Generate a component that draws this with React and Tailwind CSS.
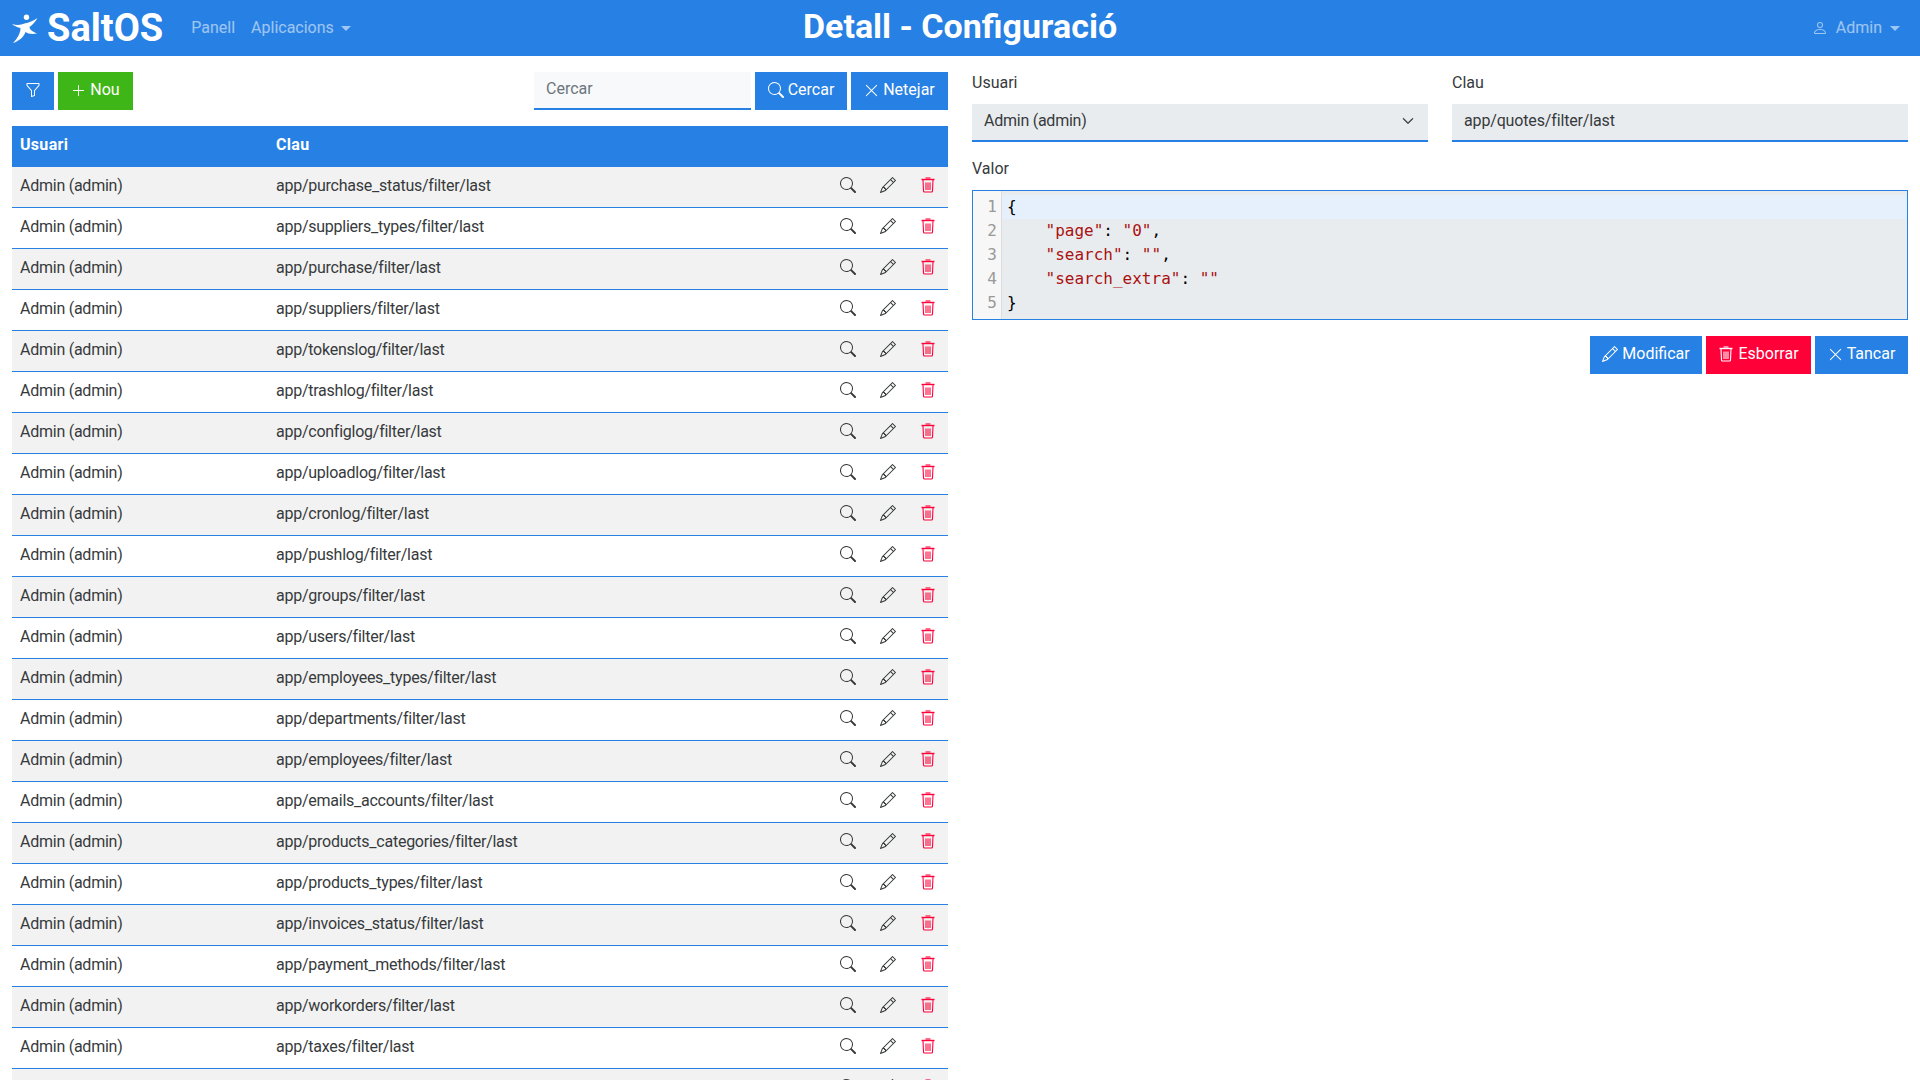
import React from "react";
import { BsFunnel, BsPlusLg, BsSearch, BsXLg, BsPencil, BsPerson, BsChevronDown } from "react-icons/bs";

const ROWS = [
  "app/purchase_status/filter/last",
  "app/suppliers_types/filter/last",
  "app/purchase/filter/last",
  "app/suppliers/filter/last",
  "app/tokenslog/filter/last",
  "app/trashlog/filter/last",
  "app/configlog/filter/last",
  "app/uploadlog/filter/last",
  "app/cronlog/filter/last",
  "app/pushlog/filter/last",
  "app/groups/filter/last",
  "app/users/filter/last",
  "app/employees_types/filter/last",
  "app/departments/filter/last",
  "app/employees/filter/last",
  "app/emails_accounts/filter/last",
  "app/products_categories/filter/last",
  "app/products_types/filter/last",
  "app/invoices_status/filter/last",
  "app/payment_methods/filter/last",
  "app/workorders/filter/last",
  "app/taxes/filter/last",
  "",
];

function Logo() {
  return (
    <svg width="26" height="30" viewBox="0 0 26 30" fill="white" className="mt-[2px]">
      <circle cx="14.5" cy="3.2" r="2.7" />
      <path d="M0 10 C5 11.5 9 11 12.5 9.5 C17 8.5 21 7 25.5 4 C23 8.5 20 11 17.5 13 C17.5 15.5 20.5 17.5 25 19.5 C20.5 20.5 16 20 13.5 18 C12 22.5 7.5 27 1 29 C5.5 24.5 8.5 19 8.5 14 C5.5 13.5 2.5 12 0 10 Z" />
    </svg>
  );
}

// bi-trash3 as the icon font hints it: narrower and crisper than the svg
function TrashIcon() {
  return (
    <svg width="16" height="16" viewBox="0 0 16 16" fill="none" stroke="currentColor" strokeWidth="1.1">
      <path d="M5.5 1h5" />
      <path d="M1.5 2.5h13" strokeWidth="1.4" />
      <path d="M3 3l.5 11a1 1 0 0 0 1 1h7a1 1 0 0 0 1-1L13 3" />
      <path d="M6 5.5v7.5M8 5.5v7.5M10 5.5v7.5" />
    </svg>
  );
}

function Button({ color = "bg-[#2780e3]", className = "", children }) {
  return (
    <button type="button" className={`${color} ${className} flex h-[38px] items-center justify-center gap-1 pb-[2px] text-white`}>
      {children}
    </button>
  );
}

function Label({ children }) {
  return <label className="mb-2 block h-6 leading-[22px] text-[#373a3c]">{children}</label>;
}

function Navbar() {
  return (
    <nav className="relative flex h-14 shrink-0 items-center bg-[#2780e3] pl-3 pr-5">
      <Logo />
      <span className="ml-[9px] text-[38px] font-bold leading-none text-white">SaltOS</span>
      <a className="ml-[28px] text-white/55">Panell</a>
      <a className="ml-4 flex items-center text-white/55">
        Aplicacions
        <span className="ml-[7px] border-x-[5px] border-t-[5px] border-x-transparent border-t-white/55" />
      </a>
      <h1 className="absolute inset-x-0 pb-[4px] text-center text-[34px] font-bold text-white">Detall - Configuració</h1>
      <a className="ml-auto flex items-center text-white/55">
        <BsPerson size={16} className="mr-2" />
        Admin
        <span className="ml-2 border-x-[5px] border-t-[5px] border-x-transparent border-t-white/55" />
      </a>
    </nav>
  );
}

function ListPanel() {
  return (
    <section className="w-[936px] shrink-0">
      <div className="flex gap-1">
        <Button className="w-[42px]"><BsFunnel size={16} /></Button>
        <Button color="bg-[#3fb618]" className="w-[75px]"><BsPlusLg size={15} />Nou</Button>
        <div className="ml-auto h-[38px] w-[217px] border-b-2 border-[#2780e3] bg-[#f8f9fa] px-3 leading-[34px] text-[#6c757d]">Cercar</div>
        <Button className="w-[92px]"><BsSearch size={16} />Cercar</Button>
        <Button className="w-[97px]"><BsXLg size={15} />Netejar</Button>
      </div>
      <table className="mt-4 w-full border-separate border-spacing-0 text-[#373a3c]">
        <thead>
          <tr className="bg-[#2780e3] text-left text-white">
            <th className="h-[41px] w-[256px] px-2 pb-[3px] font-bold tracking-[0.3px]">Usuari</th>
            <th className="h-[41px] px-2 pb-[3px] font-bold tracking-[0.3px]">Clau</th>
            <th className="h-[41px] w-[120px]" />
          </tr>
        </thead>
        <tbody>
          {ROWS.map((key, index) => (
            <tr key={key} className={index % 2 === 0 ? "bg-[#f2f2f2]" : "bg-white"}>
              <td className="h-[41px] border-b border-[#2780e3] px-2 pb-[3px] tracking-[-0.25px]">{key && "Admin (admin)"}</td>
              <td className="h-[41px] border-b border-[#2780e3] px-2 pb-[3px] tracking-[-0.25px]">{key}</td>
              <td className="h-[41px] border-b border-[#2780e3] pb-[5px]">
                <div className="flex items-center pl-[5px]">
                  <span className="flex w-10 justify-center"><BsSearch size={16} /></span>
                  <span className="flex w-10 justify-center"><BsPencil size={16} /></span>
                  <span className="flex w-10 justify-center text-[#ff0039]"><TrashIcon /></span>
                </div>
              </td>
            </tr>
          ))}
        </tbody>
      </table>
    </section>
  );
}

function Editor() {
  const str = "text-[#aa1111]";
  return (
    <div className="flex h-[130px] overflow-hidden border border-[#2780e3] bg-[#e9ecef] font-['DejaVu_Sans_Mono',monospace] text-[16px] leading-6 text-black">
      <div className="w-[29px] shrink-0 border-r border-[#ddd] bg-[#f7f7f7] pr-1 pt-1 text-right text-[#999]">
        {[1, 2, 3, 4, 5].map((line) => <div key={line}>{line}</div>)}
      </div>
      <pre className="flex-1 pt-1 font-['DejaVu_Sans_Mono',monospace]">
        <div className="bg-[#e6f0fc] pl-[5px]">{"{"}</div>
        <div className="pl-[5px]">    <span className={str}>"page"</span>: <span className={str}>"0"</span>,</div>
        <div className="pl-[5px]">    <span className={str}>"search"</span>: <span className={str}>""</span>,</div>
        <div className="pl-[5px]">    <span className={str}>"search_extra"</span>: <span className={str}>""</span></div>
        <div className="pl-[5px]">{"}"}</div>
      </pre>
    </div>
  );
}

function DetailPanel() {
  return (
    <section className="flex-1 text-[#373a3c]">
      <div className="grid grid-cols-2 gap-6">
        <div>
          <Label>Usuari</Label>
          <div className="flex h-[38px] items-center justify-between border-b-2 border-[#2780e3] bg-[#e9ecef] pb-[2px] pl-3 pr-[14px] tracking-[-0.25px]">
            Admin (admin)
            <BsChevronDown size={12} strokeWidth={1} />
          </div>
        </div>
        <div>
          <Label>Clau</Label>
          <div className="flex h-[38px] items-center border-b-2 border-[#2780e3] bg-[#e9ecef] px-3 pb-[2px] tracking-[-0.15px]">app/quotes/filter/last</div>
        </div>
      </div>
      <div className="mt-4">
        <Label>Valor</Label>
        <Editor />
      </div>
      <div className="mt-4 flex justify-end gap-1">
        <Button className="w-[112px]"><BsPencil size={16} />Modificar</Button>
        <Button color="bg-[#ff0039]" className="w-[105px]"><TrashIcon />Esborrar</Button>
        <Button className="w-[93px]"><BsXLg size={15} />Tancar</Button>
      </div>
    </section>
  );
}

export default function App() {
  return (
    <div className="flex h-screen flex-col overflow-hidden bg-white font-['Roboto','Liberation_Sans',sans-serif] text-base">
      <Navbar />
      <main className="flex gap-6 px-3 pt-4">
        <ListPanel />
        <DetailPanel />
      </main>
    </div>
  );
}
